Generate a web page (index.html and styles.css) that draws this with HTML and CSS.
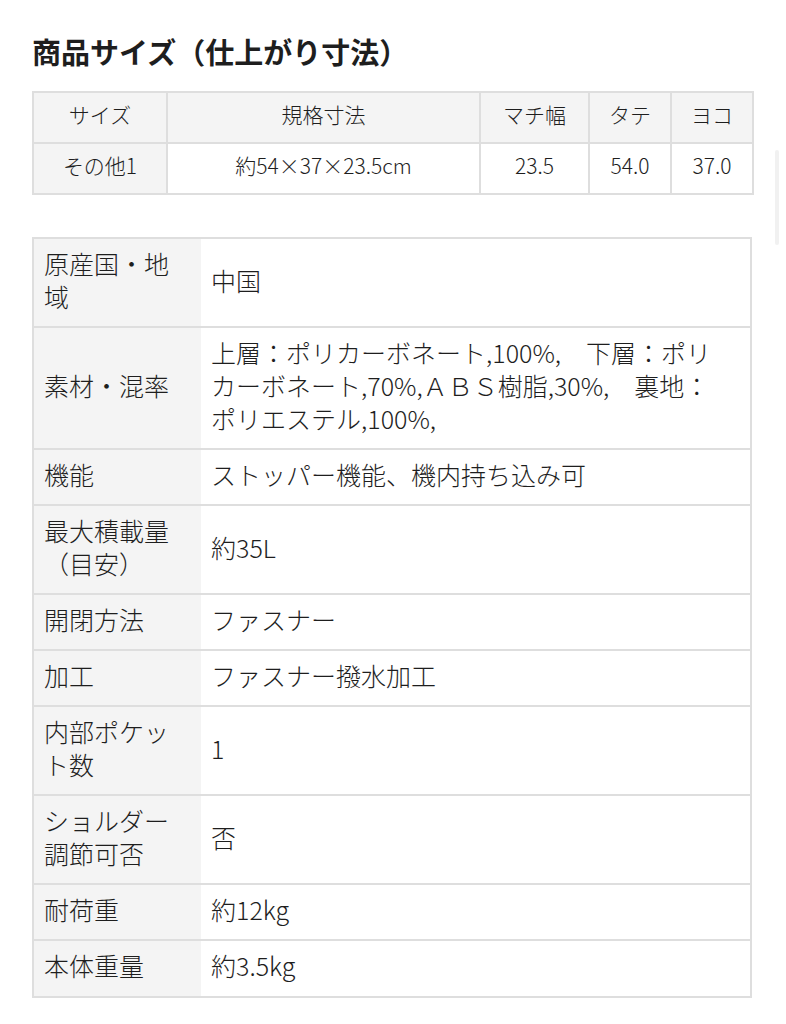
FILE: index.html
```html
<!DOCTYPE html>
<html lang="ja">
<head>
<meta charset="utf-8">
<title>商品サイズ</title>
<link rel="stylesheet" href="styles.css">
</head>
<body>
<div class="page">
  <h2 class="title">商品サイズ（仕上がり寸法）</h2>
  <table class="size">
    <colgroup>
      <col class="c1"><col class="c2"><col class="c3"><col class="c4"><col class="c5">
    </colgroup>
    <thead>
      <tr><th>サイズ</th><th>規格寸法</th><th>マチ幅</th><th>タテ</th><th>ヨコ</th></tr>
    </thead>
    <tbody>
      <tr><th>その他1</th><td>約54×37×23.5cm</td><td>23.5</td><td>54.0</td><td>37.0</td></tr>
    </tbody>
  </table>

  <table class="spec">
    <colgroup><col class="lc"><col></colgroup>
    <tbody>
      <tr><th>原産国・地域</th><td>中国</td></tr>
      <tr><th>素材・混率</th><td><span class="nw">上層：ポリカーボネート,100%,　下層：ポリ</span><br><span class="nw">カーボネート,70%,ＡＢＳ樹脂,30%,　裏地：</span><br>ポリエステル,100%,</td></tr>
      <tr><th>機能</th><td>ストッパー機能、機内持ち込み可</td></tr>
      <tr><th>最大積載量（目安）</th><td>約35L</td></tr>
      <tr><th>開閉方法</th><td>ファスナー</td></tr>
      <tr><th>加工</th><td>ファスナー撥水加工</td></tr>
      <tr><th>内部ポケット数</th><td>1</td></tr>
      <tr><th>ショルダー調節可否</th><td>否</td></tr>
      <tr><th>耐荷重</th><td>約12kg</td></tr>
      <tr><th>本体重量</th><td>約3.5kg</td></tr>
    </tbody>
  </table>
</div>
<div class="scrollbar"></div>
</body>
</html>
```

FILE: styles.css
```css
html, body {
  margin: 0;
  padding: 0;
  background: #fff;
}
body {
  font-family: "Noto Sans CJK JP", "Noto Sans", sans-serif;
  color: #1e1e1e;
  position: relative;
}
.page {
  padding: 31px 34px 40px 32px;
}
.title {
  margin: 0 0 20px 0;
  font-size: 29px;
  line-height: 40px;
  font-weight: 700;
  color: #1e1e1e;
}
table {
  border-collapse: collapse;
  width: 720px;
}
.size {
  table-layout: fixed;
  font-size: 21px;
}
.size .c1 { width: 134px; }
.size .c2 { width: 313px; }
.size .c3 { width: 109px; }
.size .c4 { width: 82px; }
.size .c5 { width: 82px; }
.size th,
.size td {
  border: 2px solid #dedede;
  height: 41px;
  padding: 0 4px 8px 4px;
  line-height: 28px;
  text-align: center;
  font-weight: 300;
  vertical-align: middle;
}
.size thead th,
.size tbody th {
  background: #f4f4f4;
}
.size td {
  background: #fff;
}
.spec {
  margin-top: 42px;
  table-layout: fixed;
  border: 2px solid #dedede;
  font-size: 25px;
}
.spec .lc { width: 168px; }
.spec th,
.spec td {
  border-top: 2px solid #dedede;
  border-bottom: 2px solid #dedede;
  padding: 8px 10px 13px 10px;
  line-height: 33px;
  font-weight: 300;
  text-align: left;
  vertical-align: middle;
}
.spec tr:last-child th,
.spec tr:last-child td {
  padding-bottom: 14px;
}
.spec th {
  background: #f4f4f4;
  padding-right: 22px;
}
.spec td {
  background: #fff;
}
.nw {
  white-space: nowrap;
}
.scrollbar {
  position: absolute;
  left: 775px;
  top: 150px;
  width: 4px;
  height: 95px;
  border-radius: 2px;
  background: #f1f1f1;
}
```
